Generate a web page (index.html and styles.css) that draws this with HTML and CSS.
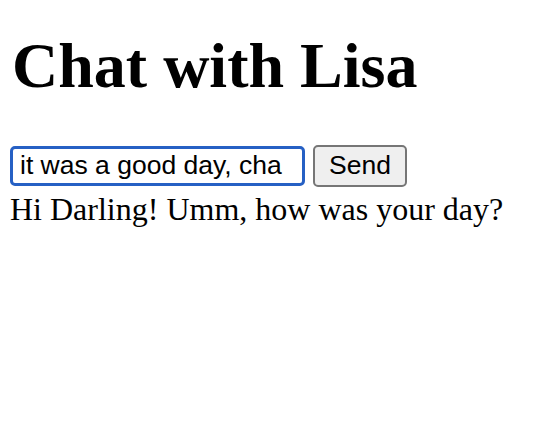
FILE: index.html
```html
<!DOCTYPE html>
<html>
<head>
<meta charset="utf-8">
<link rel="stylesheet" href="styles.css">
</head>
<body>
<h1 class="title">Chat with Lisa</h1>
<form class="chat-form">
<input class="msg-input" type="text" value="it was a good day, cha">
<button class="send-btn" type="button">Send</button>
</form>
<div class="reply">Hi Darling! Umm, how was your day?</div>
</body>
</html>
```
FILE: styles.css
```css
body {
  margin: 10px;
  font-family: "Liberation Serif", "Times New Roman", serif;
  font-size: 32px;
  color: #000;
  background: #fff;
}
.title {
  font-size: 64px;
  font-weight: bold;
  margin: 19px 0 42px 2px;
  line-height: 1.15;
}
.chat-form {
  display: flex;
  align-items: center;
  gap: 8px;
  margin: 0;
}
.msg-input {
  box-sizing: border-box;
  width: 295px;
  height: 40px;
  border: 3px solid #2660c4;
  border-radius: 5px;
  padding: 0 6px 0 7px;
  font-family: "Liberation Sans", Arial, sans-serif;
  font-size: 26.5px;
  color: #000;
  outline: none;
}
.send-btn {
  box-sizing: border-box;
  width: 94px;
  height: 42px;
  background: #efefef;
  border: 2px solid #767676;
  border-radius: 5px;
  font-family: "Liberation Sans", Arial, sans-serif;
  font-size: 26.5px;
  color: #000;
  padding: 0;
}
.reply {
  line-height: 1.15;
  margin-top: 4px;
}
```
